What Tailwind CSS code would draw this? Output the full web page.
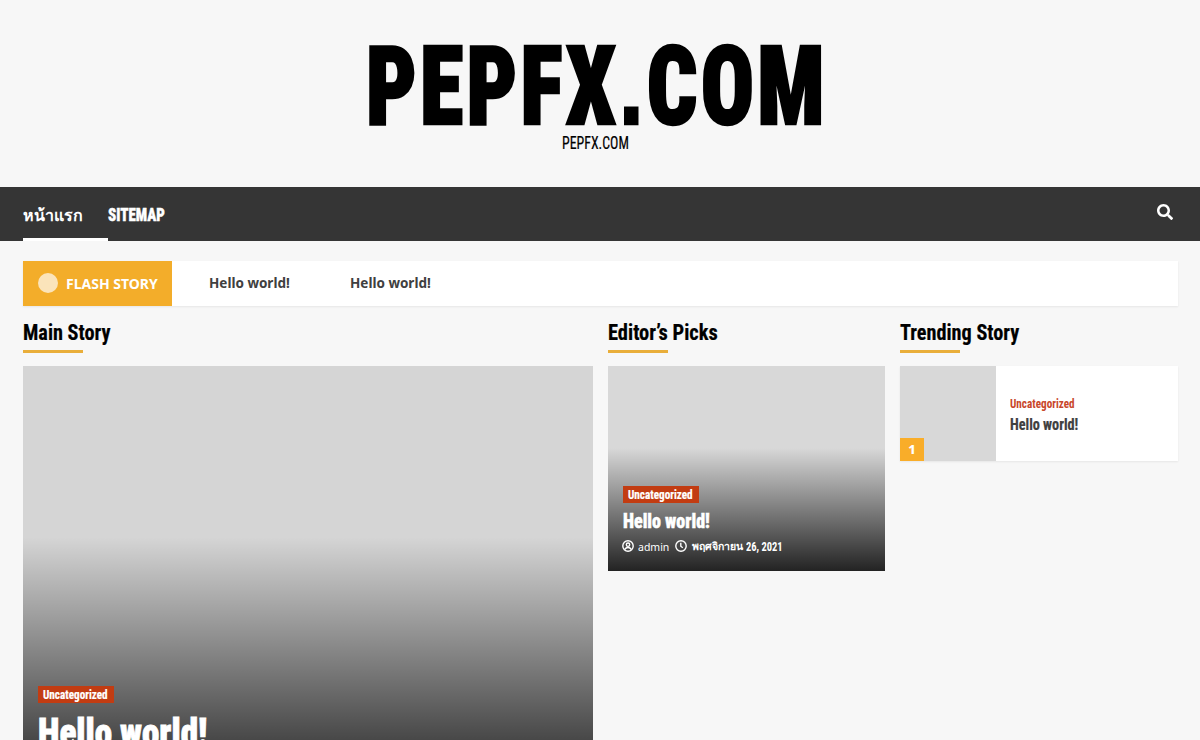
<!DOCTYPE html>
<html lang="th">
<head>
    <meta charset="UTF-8">
    <meta name="viewport" content="width=device-width, initial-scale=1.0">
    <title>PEPFX.COM</title>
    <script src="https://cdn.jsdelivr.net/npm/@tailwindcss/browser@4"></script>
</head>
<body class="bg-[#f7f7f7] font-['Roboto','Noto_Sans',sans-serif] [font-stretch:75%] w-[1200px] h-[740px] overflow-hidden">

    <!-- Site header -->
    <header class="h-[187px] flex flex-col items-center pt-[28px] text-black">
        <h1 class="w-[455px] h-[103px] mr-[6px] flex justify-center whitespace-nowrap text-[110px] leading-[115px] font-black"><span class="scale-x-[.805] tracking-[4px] [-webkit-text-stroke:2.5px_#000]">PEPFX<span class="font-['Liberation_Sans']">.</span>COM</span></h1>
        <p class="h-6 mr-[10px] flex justify-center whitespace-nowrap text-[18px] leading-6"><span class="scale-x-[.77] [-webkit-text-stroke:.2px_#000]">PEPFX.COM</span></p>
    </header>

    <!-- Navigation -->
    <nav class="h-[54px] bg-[#353535] text-white px-[23px] flex justify-between">
        <div class="flex font-bold whitespace-nowrap">
            <a class="w-[85px] border-b-3 border-white text-[16px] leading-[57px]">หน้าแรก</a>
            <a class="text-[18px] leading-[55px] font-black"><span class="inline-block origin-left scale-x-[.83] [-webkit-text-stroke:.4px_#fff]">SITEMAP</span></a>
        </div>
        <svg class="w-4 h-4 mt-[17px] mr-1" viewBox="0 0 512 512" fill="currentColor"><path d="M505 442.700L405.300 343c-4.500-4.500-10.600-7-17-7H372c27.600-35.300 44-79.700 44-128C416 93.100 322.900 0 208 0S0 93.100 0 208s93.100 208 208 208c48.300 0 92.700-16.400 128-44v16.300c0 6.400 2.500 12.500 7 17l99.700 99.700c9.400 9.400 24.600 9.400 33.900 0l28.300-28.300c9.400-9.400 9.400-24.600.1-34zM208 336c-70.700 0-128-57.200-128-128 0-70.700 57.200-128 128-128 70.700 0 128 57.200 128 128 0 70.700-57.200 128-128 128z"/></svg>
    </nav>

    <main class="px-[23px] pt-5">
        <!-- Flash story -->
        <div class="w-[1155px] h-[45px] bg-white shadow-[0_1px_2px_rgba(0,0,0,0.07)] flex items-center whitespace-nowrap [font-stretch:100%] font-['Noto_Sans',sans-serif] font-bold text-[14px] text-[#404040]">
            <div class="w-[149px] h-full bg-[#f3ad2a] text-white flex items-center pl-[15px]">
                <span class="w-5 h-5 -mt-0.5 mr-2 rounded-full bg-[#fbe4ba]"></span>
                <span>FLASH STORY</span>
            </div>
            <span class="ml-[37px] w-[141px] text-[13.500px]">Hello world!</span>
            <span class="text-[13.500px]">Hello world!</span>
        </div>

        <div class="w-[1155px] mt-[12px] flex gap-[15px] whitespace-nowrap">
            <!-- Main story -->
            <section class="w-[570px]">
                <h2 class="h-[35px] text-[22px] leading-[30px] font-bold text-black"><span class="inline-block origin-left scale-x-[.92] [-webkit-text-stroke:.2px_#000]">Main Story</span></h2>
                <div class="w-[60px] h-[3px] -mt-[3px] bg-[#e9ae3a]"></div>
                <article class="mt-[13px] h-[374px] overflow-hidden">
                    <div class="h-[428px] bg-[#d5d5d5]">
                        <div class="h-full bg-linear-to-b from-transparent from-40% to-black/84 pt-[320px] pl-[15px] text-white">
                            <span class="flex w-[76px] h-[17px] bg-[#c23c12] pl-[5px] text-[12px] leading-[18px] font-bold"><span class="origin-left scale-x-[.93] [-webkit-text-stroke:.2px_#fff]">Uncategorized</span></span>
                            <h3 class="mt-[4px] text-[39px] leading-[53px] font-black"><span class="inline-block origin-left scale-x-[.9] [-webkit-text-stroke:.8px_#fff]">Hello world!</span></h3>
                        </div>
                    </div>
                </article>
            </section>

            <!-- Editor's picks -->
            <section class="w-[277px]">
                <h2 class="h-[35px] text-[22px] leading-[30px] font-bold text-black"><span class="inline-block origin-left scale-x-[.93] [-webkit-text-stroke:.2px_#000]">Editor’s Picks</span></h2>
                <div class="w-[60px] h-[3px] -mt-[3px] bg-[#e9ae3a]"></div>
                <article class="mt-[13px] h-[205px] bg-[#d8d8d8]">
                    <div class="h-full bg-linear-to-b from-transparent from-40% to-black/84 pt-[120px] pl-[15px] text-white">
                        <span class="flex w-[76px] h-[17px] bg-[#c23c12] pl-[5px] text-[12px] leading-[18px] font-bold"><span class="origin-left scale-x-[.93] [-webkit-text-stroke:.2px_#fff]">Uncategorized</span></span>
                        <h3 class="mt-[5px] text-[20px] leading-[26px] font-black"><span class="inline-block origin-left scale-x-[.9] [-webkit-text-stroke:.4px_#fff]">Hello world!</span></h3>
                        <div class="mt-[4px] flex items-center text-[11px] leading-[14px]">
                            <svg class="w-3 h-3 -ml-px mr-1" viewBox="0 0 12 12" fill="none" stroke="currentColor" stroke-width="1.400"><circle cx="6" cy="6" r="5.200"/><circle cx="6" cy="4.700" r="1.700"/><path d="M2.900 9.600c.4-1.700 1.500-2.100 3.100-2.100s2.700.4 3.100 2.100"/></svg>
                            <span class="w-[31px] mt-0.5 text-[10.500px] [font-stretch:100%] font-['Noto_Sans']">admin</span>
                            <svg class="w-3 h-3 ml-1.5 mr-[5px]" viewBox="0 0 12 12" fill="none" stroke="currentColor" stroke-width="1.400"><circle cx="6" cy="6" r="5.200"/><path d="M5.800 2.800v3.400l2 1.500"/></svg>
                            <span class="w-[54px] mt-0.5 text-[10.500px] font-bold">พฤศจิกายน</span><span class="mt-px text-[12px] font-bold origin-left scale-x-[.87]">26, 2021</span>
                        </div>
                    </div>
                </article>
            </section>

            <!-- Trending story -->
            <section class="w-[278px]">
                <h2 class="h-[35px] text-[22px] leading-[30px] font-bold text-black"><span class="inline-block origin-left scale-x-[.92] [-webkit-text-stroke:.2px_#000]">Trending Story</span></h2>
                <div class="w-[60px] h-[3px] -mt-[3px] bg-[#e9ae3a]"></div>
                <article class="mt-[13px] h-[95px] bg-white shadow-[0_1px_2px_rgba(0,0,0,0.07)] flex">
                    <div class="w-24 bg-[#d8d8d8] flex items-end">
                        <span class="w-6 h-[23px] bg-[#f9ad29] text-white text-center [font-stretch:100%] font-['Noto_Sans'] font-extrabold text-[13px] leading-[23px]">1</span>
                    </div>
                    <div class="pl-[14px] pt-[30px]">
                        <p class="text-[12px] leading-[17px] text-[#c8462a] font-bold"><span class="inline-block origin-left scale-x-[.93]">Uncategorized</span></p>
                        <h3 class="mt-px text-[16px] leading-[21px] font-bold text-[#404040]"><span class="inline-block origin-left scale-x-[.89] [-webkit-text-stroke:.2px_#404040]">Hello world!</span></h3>
                    </div>
                </article>
            </section>
        </div>
    </main>

</body>
</html>
